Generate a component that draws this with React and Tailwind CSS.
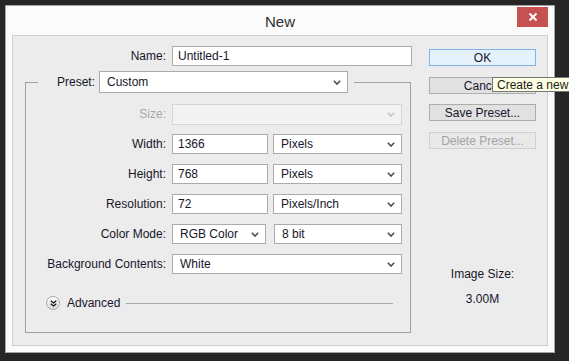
import React from 'react';

// small dropdown arrow used by every select
const Chevron = ({ disabled }) => (
  <svg width="8" height="5" viewBox="0 0 8 5" className="shrink-0">
    <polyline points="0.8,0.8 4,4 7.2,0.8" fill="none" stroke={disabled ? '#c4c4c4' : '#4a4a4a'} strokeWidth="1.6" />
  </svg>
);

const Field = ({ value, className = '' }) => (
  <div className={`h-[20px] border border-[#ababab] bg-white pl-[5px] flex items-center ${className}`}>
    {value}
  </div>
);

const Select = ({ value, className = '', h = 'h-[20px]' }) => (
  <div className={`${h} border border-[#ababab] bg-white pl-[7px] pr-[6px] flex items-center justify-between ${className}`}>
    <span>{value}</span>
    <Chevron />
  </div>
);

const Row = ({ label, children, first }) => (
  <div className={`flex items-center h-[20px] ${first ? '' : 'mt-[10px]'}`}>
    <span className="w-[128px] text-right">{label}</span>
    <div className="ml-[6px] flex items-center">{children}</div>
  </div>
);

const Button = ({ children, className = '' }) => (
  <div className={`w-[107px] h-[17px] border flex items-center justify-center leading-none ${className}`}>
    {children}
  </div>
);

export default function App() {
  return (
    <div className="relative w-[569px] h-[361px] overflow-hidden bg-[#262626] pt-[5px] pl-[5px] font-['Liberation_Sans',Arial,sans-serif] text-[12px] text-[#16162a]">
      {/* Dialog window */}
      <div className="w-[550px] h-[348px] border border-[#a3a3a3] bg-[#fbfbfb] flex flex-col">
        {/* Title bar */}
        <div className="relative h-[29px] flex items-center justify-center pt-[2px]">
          <span className="text-[15px] text-[#2e2e2e] leading-none">New</span>
          <div className="absolute right-[6px] top-px w-[31px] h-[20px] bg-[#c75050] flex items-center justify-center">
            <svg width="10" height="10" viewBox="0 0 10 10">
              <path d="M1.5 1.5 L8.5 8.5 M8.5 1.5 L1.5 8.5" stroke="#fff" strokeWidth="2" />
            </svg>
          </div>
        </div>

        {/* Content panel */}
        <div className="mx-[6px] h-[311px] border border-[#cfcfcf] bg-[#ececec] flex">
          {/* Left: form */}
          <div className="w-[399px]">
            <div className="mt-[10px] flex items-center">
              <span className="w-[153px] text-right">Name:</span>
              <Field value="Untitled-1" className="ml-[6px] w-[240px]" />
            </div>

            <fieldset className="ml-[12px] mt-[5px] w-[386px] border border-[#a0a0a0] pl-[12px] pr-[7px] pt-[11px] pb-[22px]">
              <legend className="pr-[6px]">
                <div className="flex items-center">
                  <span className="w-[57px] text-right">Preset:</span>
                  <Select value="Custom" h="h-[22px]" className="ml-[4px] w-[249px]" />
                </div>
              </legend>

              <div className="flex items-center h-[20px]">
                <span className="w-[128px] text-right text-[#a8a8a8]">Size:</span>
                <div className="ml-[6px] w-[230px] h-[21px] border border-[#d6d6d6] bg-[#f2f2f2] flex items-center justify-end pr-[6px]">
                  <Chevron disabled />
                </div>
              </div>
              <Row label="Width:">
                <Field value="1366" className="w-[96px]" />
                <Select value="Pixels" className="ml-[5px] w-[129px]" />
              </Row>
              <Row label="Height:">
                <Field value="768" className="w-[96px]" />
                <Select value="Pixels" className="ml-[5px] w-[129px]" />
              </Row>
              <Row label="Resolution:">
                <Field value="72" className="w-[96px]" />
                <Select value="Pixels/Inch" className="ml-[5px] w-[129px]" />
              </Row>
              <Row label="Color Mode:">
                <Select value="RGB Color" className="w-[94px]" />
                <Select value="8 bit" className="ml-[8px] w-[128px]" />
              </Row>
              <Row label="Background Contents:">
                <Select value="White" className="w-[230px]" />
              </Row>

              {/* Advanced */}
              <div className="mt-[22px] h-[14px] flex items-center">
                <div className="ml-[8px] w-[14px] h-[14px] rounded-full border border-[#a9a9a9] bg-gradient-to-b from-white to-[#dcdcdc] flex items-center justify-center">
                  <svg width="7" height="7" viewBox="0 0 7 7">
                    <polyline points="0.7,0.7 3.5,3 6.3,0.7" fill="none" stroke="#111" strokeWidth="1.2" />
                    <polyline points="0.7,3.7 3.5,6 6.3,3.7" fill="none" stroke="#111" strokeWidth="1.2" />
                  </svg>
                </div>
                <span className="ml-[7px]">Advanced</span>
                <div className="ml-[6px] w-[267px] h-px bg-[#a9a9a9]" />
              </div>
            </fieldset>
          </div>

          {/* Right: buttons and image size */}
          <div className="ml-[17px] pt-[13px] flex flex-col">
            <Button className="border-[#7eb4ea] bg-[#e5f1fb]">OK</Button>
            <Button className="mt-[11px] border-[#adadad] bg-[#e1e1e1]">Cancel</Button>
            <Button className="mt-[10px] border-[#adadad] bg-[#e1e1e1]">Save Preset...</Button>
            <Button className="mt-[11px] border-[#d0d0d0] bg-[#e9e9e9] text-[#a3a3a3]">Delete Preset...</Button>
            <div className="mt-[118px] w-[107px] text-center leading-[14px]">Image Size:</div>
            <div className="mt-[11px] w-[107px] text-center leading-[14px]">3.00M</div>
          </div>
        </div>
      </div>

      {/* Tooltip over Cancel */}
      <div className="absolute left-[492px] top-[77px] h-[15px] border border-[#767676] bg-[#ffffe1] px-[4px] flex items-center whitespace-nowrap text-[#1b1b1b]">
        Create a new document
      </div>
    </div>
  );
}
